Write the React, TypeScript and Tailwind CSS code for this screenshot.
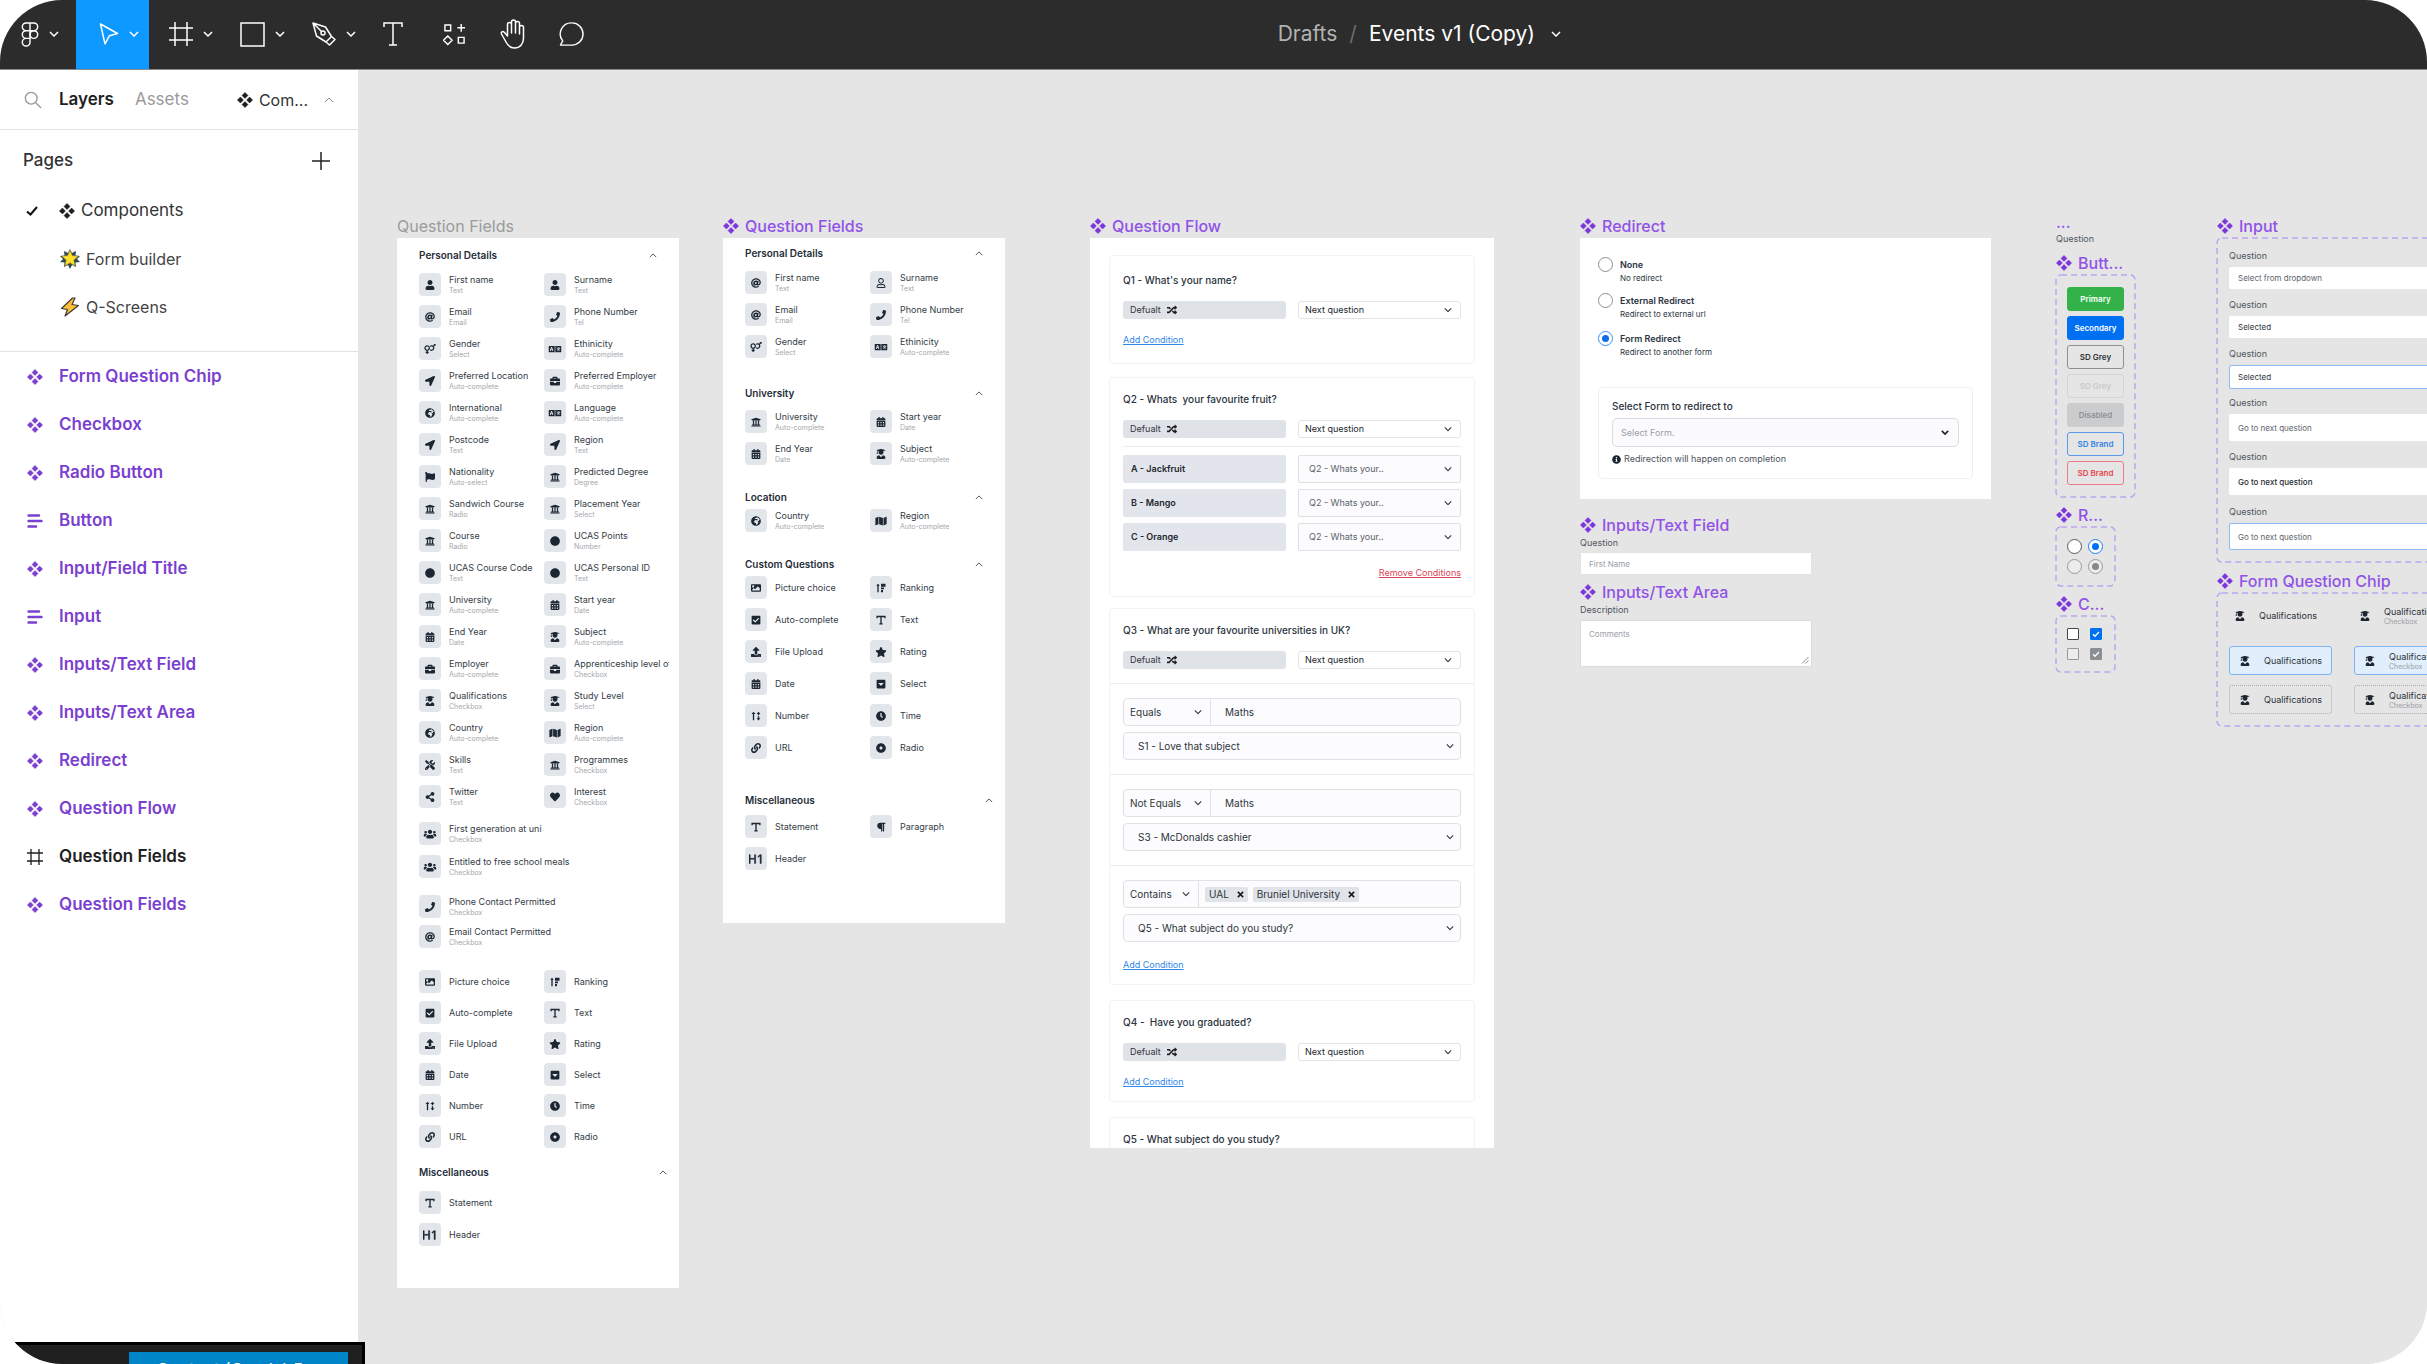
import React from "react";
import {
  FaUser, FaRegUser, FaAt, FaPhone, FaVenusMars, FaLanguage, FaLocationArrow, FaBriefcase, FaFlag,
  FaUniversity, FaCircle, FaCalendarAlt, FaUserGraduate, FaGlobeAfrica, FaMap, FaTools, FaShareAlt,
  FaHeart, FaUsers, FaImage, FaCaretSquareDown, FaCheckSquare, FaUpload, FaStar, FaClock, FaDotCircle,
  FaLink, FaParagraph, FaRandom, FaInfoCircle,
} from "react-icons/fa";
import { BsTypeH1 } from "react-icons/bs";

type IconType = React.ComponentType<{ className?: string }>;

/* ---------- icons ---------- */

function Diamonds({ className = "" }: { className?: string }) {
  return (
    <svg viewBox="0 0 16 16" fill="currentColor" className={className} aria-hidden="true">
      <path d="M8 .4 11 3.4 8 6.4 5 3.4zM8 9.6l3 3-3 3-3-3zM3.4 5l3 3-3 3-3-3zM12.6 5l3 3-3 3-3-3z" stroke="currentColor" strokeWidth=".5" strokeLinejoin="round" />
    </svg>
  );
}

function Chevron({ className = "", up = false, weight = 1.5 }: { className?: string; up?: boolean; weight?: number }) {
  return (
    <svg viewBox="0 0 10 6" fill="none" stroke="currentColor" strokeWidth={weight} className={className} aria-hidden="true">
      <path d={up ? "M1 5l4-4 4 4" : "M1 1l4 4 4-4"} />
    </svg>
  );
}

function TextIcon({ className = "" }: { className?: string }) {
  return (
    <svg viewBox="0 0 12 12" fill="none" stroke="currentColor" strokeWidth="1.6" className={className} aria-hidden="true">
      <path d="M1.3 4V1.8h9.4V4M6 1.8v8.7M4 10.6h4" />
    </svg>
  );
}

function RankingIcon({ className = "" }: { className?: string }) {
  return (
    <svg viewBox="0 0 12 12" fill="currentColor" className={className} aria-hidden="true">
      <path d="M2.4.8 4.6 3.4H3.2v7.8H1.6V3.4H.2zM6 1h5.4v3.4H6zM6 5.4h3.6v2H6zM6 8.4h2.4v2.8H6z" />
    </svg>
  );
}

function NumberIcon({ className = "" }: { className?: string }) {
  return (
    <svg viewBox="0 0 12 12" fill="currentColor" className={className} aria-hidden="true">
      <path d="M3 .8 5.4 3.6H3.8v7.6H2.2V3.6H.6zM9 .8l2.400 2.800H9.800v1.600H8.200V3.600H6.600zM8.200 6.200h1.600v2.400h1.500L9 11.400 6.700 8.600h1.500z" />
    </svg>
  );
}

function HeaderIcon({ className = "" }: { className?: string }) {
  return (
    <span className={`flex items-center justify-center ${className}`}>
      <BsTypeH1 className="h-3.5 w-3.5 shrink-0 stroke-current stroke-[0.6]" />
    </span>
  );
}

function FrameIcon({ className = "", weight = 1.5 }: { className?: string; weight?: number }) {
  return (
    <svg viewBox="0 0 24 24" fill="none" stroke="currentColor" strokeWidth={weight} className={className} aria-hidden="true">
      <path d="M6 0v24M18 0v24M0 6h24M0 18h24" />
    </svg>
  );
}

function AlignIcon({ className = "" }: { className?: string }) {
  return (
    <svg viewBox="0 0 16 16" fill="none" stroke="currentColor" strokeWidth="2.4" strokeLinecap="round" className={className} aria-hidden="true">
      <path d="M1.500 2.500h10.500M1.500 8h13M1.500 13.500h7.500" />
    </svg>
  );
}

/* ---------- toolbar ---------- */

function Tool({ label, width, active = false, menu = false, children }: {
  label: string; width: string; active?: boolean; menu?: boolean; children: React.ReactNode;
}) {
  return (
    <button aria-label={label} className={`flex h-full items-center justify-center gap-2.5 text-white ${width} ${active ? "bg-[#0d99ff]" : ""}`}>
      {children}
      {menu && <Chevron className="h-1.5 w-2.5" />}
    </button>
  );
}

function Toolbar() {
  const stroke = { fill: "none", stroke: "currentColor", strokeWidth: 1.5 } as const;
  return (
    <header className="flex h-[70px] shrink-0 items-center border-b border-[#8a8a8a] bg-[#2c2c2c] pb-px text-white">
      <nav aria-label="Tools" className="flex h-[70px] flex-1 items-center">
        <Tool label="Main menu" width="w-[76px] pl-1" menu>
          <svg viewBox="0 0 18 26" {...stroke} className="h-[25px] w-[18px]">
            <path d="M9 1H5a4 4 0 0 0 0 8h4zM9 1h4a4 4 0 0 1 0 8H9zM9 9H5a4 4 0 0 0 0 8h4zM9 17H5a4 4 0 1 0 4 4z" />
            <circle cx="13" cy="13" r="4" />
          </svg>
        </Tool>
        <Tool label="Move" width="w-[73px] pl-3" active menu>
          <svg viewBox="0 0 20 22" {...stroke} strokeLinejoin="round" className="h-[22px] w-5">
            <path d="M1.500 1l17 9.500-8 2.200L6 20.800z" />
          </svg>
        </Tool>
        <Tool label="Frame" width="w-[72px] pl-3" menu><FrameIcon className="h-6 w-6" /></Tool>
        <Tool label="Rectangle" width="w-[71px] pl-3" menu>
          <svg viewBox="0 0 25 25" {...stroke} className="h-[25px] w-[25px]"><path d="M1 1h23v23H1z" /></svg>
        </Tool>
        <Tool label="Pen" width="w-[72px] pl-3" menu>
          <svg viewBox="0 0 24 24" {...stroke} strokeLinejoin="round" className="h-6 w-6">
            <path d="M1 1l3.500 13 9.500 6 5.500-5.500L13.500 5zM14 20l3.500 3 5.500-5.500-3.500-3M1.500 1.500l8 8" />
            <circle cx="11" cy="11" r="2" />
          </svg>
        </Tool>
        <Tool label="Text" width="w-[58px]">
          <svg viewBox="0 0 20 24" {...stroke} className="h-6 w-5"><path d="M1 5V1h18v4M10 1v22M6 23h8" /></svg>
        </Tool>
        <Tool label="Resources" width="w-[64px]">
          <svg viewBox="0 0 24 24" {...stroke} className="h-[23px] w-[23px]">
            <path d="M2 2h6v6H2zM16 15h6v6h-6zM19 1v8M15 5h8M5 13.500l4.500 4.500L5 22.500.5 18z" />
          </svg>
        </Tool>
        <Tool label="Hand" width="w-[54px]">
          <svg viewBox="0 0 26 30" {...stroke} strokeLinejoin="round" strokeLinecap="round" className="h-[30px] w-[26px]">
            <path d="M7.500 17V5.500a2 2 0 0 1 4 0V14 3a2 2 0 0 1 4 0v11V4.500a2 2 0 0 1 4 0V15 8.500a2 2 0 0 1 4 0V19c0 6-3.500 10-9 10-4.500 0-6.500-2-8.500-6l-4.500-8c-.8-1.800 1.200-3.200 2.800-1.800z" />
          </svg>
        </Tool>
        <Tool label="Comment" width="w-[62px]">
          <svg viewBox="0 0 28 26" {...stroke} strokeLinejoin="round" className="h-6 w-[27px]">
            <path d="M14.500 1a12 12 0 1 1 0 24H2l2.500-4.500A12 12 0 0 1 14.500 1z" />
          </svg>
        </Tool>
      </nav>
      <div className="flex items-center text-[21px] leading-7">
        <a href="#drafts" className="text-[#b3b3b3]">Drafts</a>
        <span className="px-3 text-[#6b6b6b]">/</span>
        <button className="flex items-center gap-4">
          Events v1 (Copy)
          <Chevron className="h-1.5 w-2.5" />
        </button>
      </div>
      <div className="w-[866px]" />
    </header>
  );
}

/* ---------- sidebar ---------- */

const layers: { name: string; kind?: "set" | "frame" }[] = [
  { name: "Form Question Chip" }, { name: "Checkbox" }, { name: "Radio Button" }, { name: "Button", kind: "set" },
  { name: "Input/Field Title" }, { name: "Input", kind: "set" }, { name: "Inputs/Text Field" }, { name: "Inputs/Text Area" },
  { name: "Redirect" }, { name: "Question Flow" }, { name: "Question Fields", kind: "frame" }, { name: "Question Fields" },
];

function Sidebar() {
  return (
    <aside className="w-[358px] shrink-0 bg-white text-[17px] text-[#333]">
      <div className="flex h-[60px] items-center border-b border-[#e2e2e2] pl-6 pr-6 pt-px">
        <svg viewBox="0 0 20 20" fill="none" stroke="#9a9a9a" strokeWidth="1.5" className="h-5 w-[18px]" aria-hidden="true">
          <circle cx="8" cy="8" r="6.500" /><path d="M13 13l6 6" />
        </svg>
        <button className="ml-[17px] font-semibold text-[#1f1f1f]">Layers</button>
        <button className="ml-[21px] text-[#9a9a9a]">Assets</button>
        <button className="ml-auto flex items-center gap-1.5 text-[16px]">
          <Diamonds className="h-4 w-4 text-[#1f1f1f]" />
          Com...
          <Chevron up className="ml-2.5 h-1.5 w-2.5 text-[#8a8a8a]" weight={1} />
        </button>
      </div>
      <div className="border-b border-[#e2e2e2] pb-5">
        <div className="flex h-[57px] items-center justify-between pl-[23px] pr-7 pt-1">
          <h2 className="font-medium">Pages</h2>
          <button aria-label="Add page">
            <svg viewBox="0 0 18 18" stroke="#222" strokeWidth="1.5" className="h-[18px] w-[18px]"><path d="M9 0v18M0 9h18" /></svg>
          </button>
        </div>
        <a href="#components" className="flex h-12 items-center pl-[26px]">
          <svg viewBox="0 0 12 10" fill="none" stroke="#111" strokeWidth="2" className="h-2.5 w-3" aria-hidden="true"><path d="M1 5.500l3.500 3L11 1" /></svg>
          <Diamonds className="ml-[21px] mr-1.5 h-4 w-4 text-[#1f1f1f]" />
          Components
        </a>
        <a href="#form-builder" className="flex h-12 items-center gap-1.5 pl-[60px] text-[16px] text-[#444]">
          <svg viewBox="0 0 20 20" className="h-5 w-5" aria-hidden="true">
            <path d="M10 0l2 4 4-2-.5 4.500L20 7l-3 3 3 3-4.500.5L16 18l-4-2-2 4-2-4-4 2 .5-4.500L0 13l3-3-3-3 4.500-.5L4 2l4 2z" fill="#2c4a52" />
            <path d="M10 1.500l2.300 5.200 5.700.6-4.300 3.800 1.300 5.600-5-3-5 3 1.300-5.600L2 7.300l5.700-.6z" fill="#fde12d" stroke="#c79a12" strokeWidth=".6" />
          </svg>
          Form builder
        </a>
        <a href="#q-screens" className="flex h-12 items-center gap-1.5 pl-[60px] text-[16px] text-[#444]">
          <svg viewBox="0 0 20 20" className="h-5 w-5" aria-hidden="true">
            <path d="M12.500 1L1.500 11.500l6 1L5 19l13.500-10.500-6.500-1L15 1z" fill="#fcbf3a" stroke="#3d3a38" strokeWidth="1.200" strokeLinejoin="round" />
          </svg>
          Q-Screens
        </a>
      </div>
      <ul className="pt-px">
        {layers.map((l, i) => (
          <li key={i}>
            <a href={`#layer-${i}`} className={`flex h-12 items-center gap-4 pl-[27px] font-semibold ${l.kind === "frame" ? "text-[#222]" : "text-[#7b3fd0]"}`}>
              {l.kind === "frame" ? <FrameIcon className="h-4 w-4" weight={2} /> : l.kind === "set" ? <AlignIcon className="h-4 w-4" /> : <Diamonds className="h-4 w-4" />}
              {l.name}
            </a>
          </li>
        ))}
      </ul>
    </aside>
  );
}

/* ---------- canvas building blocks ---------- */

function Frame({ title, place, plain = false, children }: {
  title: string; place: string; plain?: boolean; children: React.ReactNode;
}) {
  return (
    <section className={`absolute ${place}`}>
      <h3 className={`flex h-[23px] items-center gap-1.5 whitespace-nowrap pb-px text-[16px] leading-[22px] ${plain ? "text-[#9b9b9b]" : "font-medium text-[#9152e8]"}`}>
        {!plain && <Diamonds className="h-4 w-4 shrink-0 text-[#7c35dc]" />}
        {title}
      </h3>
      {children}
    </section>
  );
}

type Item = [icon: IconType, name: string, sub?: string];

function Field({ item: [Icon, name, sub] }: { item: Item }) {
  return (
    <div className="flex h-[23px] min-w-0 items-center gap-2 overflow-hidden whitespace-nowrap">
      <span className="flex h-[23px] w-[22px] shrink-0 items-center justify-center rounded-[4px] bg-[#e2e5ea] text-[#1c2733]">
        <Icon className="h-2.5 w-3.5" />
      </span>
      {sub ? (
        <span className="self-end">
          <span className="block text-[9px] leading-[11px] text-[#343c46]">{name}</span>
          <span className="block text-[7px] leading-[11px] text-[#a3a7ad]">{sub}</span>
        </span>
      ) : (
        <span className="text-[9px] leading-[11px] text-[#343c46]">{name}</span>
      )}
    </div>
  );
}

function Fields({ items, space, single = false, gap = "gap-y-[9px]" }: { items: Item[]; space: string; single?: boolean; gap?: string }) {
  return (
    <div className={`grid pr-2.5 ${single ? "grid-cols-1" : "grid-cols-[125px_1fr]"} ${gap} ${space}`}>
      {items.map((it, i) => <Field key={i} item={it} />)}
    </div>
  );
}

function Heading({ title, space, inset = "pr-[22px]" }: { title: string; space: string; inset?: string }) {
  return (
    <div className={`flex h-3.5 items-center justify-between ${inset} ${space}`}>
      <h4 className="text-[10px] font-semibold leading-[14px] text-[#252d38]">{title}</h4>
      <button aria-label={`Collapse ${title}`}><Chevron up className="h-[5px] w-2 text-[#4a5058]" weight={1.2} /></button>
    </div>
  );
}

const T: IconType = TextIcon;

const allDetails: Item[] = [
  [FaUser, "First name", "Text"], [FaUser, "Surname", "Text"],
  [FaAt, "Email", "Email"], [FaPhone, "Phone Number", "Tel"],
  [FaVenusMars, "Gender", "Select"], [FaLanguage, "Ethinicity", "Auto-complete"],
  [FaLocationArrow, "Preferred Location", "Auto-complete"], [FaBriefcase, "Preferred Employer", "Auto-complete"],
  [FaGlobeAfrica, "International", "Auto-complete"], [FaLanguage, "Language", "Auto-complete"],
  [FaLocationArrow, "Postcode", "Text"], [FaLocationArrow, "Region", "Text"],
  [FaFlag, "Nationality", "Auto-select"], [FaUniversity, "Predicted Degree", "Degree"],
  [FaUniversity, "Sandwich Course", "Radio"], [FaUniversity, "Placement Year", "Select"],
  [FaUniversity, "Course", "Radio"], [FaCircle, "UCAS Points", "Number"],
  [FaCircle, "UCAS Course Code", "Text"], [FaCircle, "UCAS Personal ID", "Text"],
  [FaUniversity, "University", "Auto-complete"], [FaCalendarAlt, "Start year", "Date"],
  [FaCalendarAlt, "End Year", "Date"], [FaUserGraduate, "Subject", "Auto-complete"],
  [FaBriefcase, "Employer", "Auto-complete"], [FaBriefcase, "Apprenticeship level of interest", "Checkbox"],
  [FaUserGraduate, "Qualifications", "Checkbox"], [FaUserGraduate, "Study Level", "Select"],
  [FaGlobeAfrica, "Country", "Auto-complete"], [FaMap, "Region", "Auto-complete"],
  [FaTools, "Skills", "Text"], [FaUniversity, "Programmes", "Checkbox"],
  [FaShareAlt, "Twitter", "Text"], [FaHeart, "Interest", "Checkbox"],
];

const customQuestions: Item[] = [
  [FaImage, "Picture choice"], [RankingIcon, "Ranking"],
  [FaCheckSquare, "Auto-complete"], [T, "Text"],
  [FaUpload, "File Upload"], [FaStar, "Rating"],
  [FaCalendarAlt, "Date"], [FaCaretSquareDown, "Select"],
  [NumberIcon, "Number"], [FaClock, "Time"],
  [FaLink, "URL"], [FaDotCircle, "Radio"],
];

function QuestionFieldsFull() {
  return (
    <Frame title="Question Fields" place="left-[39px] top-[145px] w-[282px]" plain>
      <div className="bg-white pb-[42px] pl-[22px] pt-2.5">
        <Heading title="Personal Details" space="" />
        <Fields items={allDetails} space="mt-[11px]" />
        <Fields single gap="gap-y-2.5" space="mt-[14px]" items={[
          [FaUsers, "First generation at uni", "Checkbox"], [FaUsers, "Entitled to free school meals", "Checkbox"],
        ]} />
        <Fields single gap="gap-y-[7px]" space="mt-[17px]" items={[
          [FaPhone, "Phone Contact Permitted", "Checkbox"], [FaAt, "Email Contact Permitted", "Checkbox"],
        ]} />
        <Fields items={customQuestions} gap="gap-y-2" space="mt-[22px]" />
        <Heading title="Miscellaneous" space="mt-[17px]" inset="pr-3" />
        <Fields single space="mt-3" items={[[T, "Statement"], [HeaderIcon, "Header"]]} />
      </div>
    </Frame>
  );
}

function QuestionFieldsComponent() {
  return (
    <Frame title="Question Fields" place="left-[365px] top-[145px] w-[282px]">
      <div className="bg-white pb-[53px] pl-[22px] pt-2">
        <Heading title="Personal Details" space="" />
        <Fields space="mt-[11px]" items={[
          [FaAt, "First name", "Text"], [FaRegUser, "Surname", "Text"],
          [FaAt, "Email", "Email"], [FaPhone, "Phone Number", "Tel"],
          [FaVenusMars, "Gender", "Select"], [FaLanguage, "Ethinicity", "Auto-complete"],
        ]} />
        <Heading title="University" space="mt-7" />
        <Fields space="mt-2.5" items={[
          [FaUniversity, "University", "Auto-complete"], [FaCalendarAlt, "Start year", "Date"],
          [FaCalendarAlt, "End Year", "Date"], [FaUserGraduate, "Subject", "Auto-complete"],
        ]} />
        <Heading title="Location" space="mt-[25px]" />
        <Fields space="mt-[5px]" items={[[FaGlobeAfrica, "Country", "Auto-complete"], [FaMap, "Region", "Auto-complete"]]} />
        <Heading title="Custom Questions" space="mt-[25px]" />
        <Fields space="mt-[5px]" items={customQuestions} />
        <Heading title="Miscellaneous" space="mt-[34px]" inset="pr-3" />
        <Fields space="mt-2" items={[[T, "Statement"], [FaParagraph, "Paragraph"], [HeaderIcon, "Header"]]} />
      </div>
    </Frame>
  );
}

/* ---------- question flow ---------- */

function Select({ label, value, box, text, arrow = "right-2" }: { label: string; value: string; box: string; text: string; arrow?: string }) {
  return (
    <div className={`relative ${box}`}>
      <select aria-label={label} defaultValue={value} className={`block h-full w-full appearance-none bg-transparent leading-4 outline-none ${text}`}>
        <option>{value}</option>
      </select>
      <Chevron className={`pointer-events-none absolute top-1/2 h-[5px] w-2 -translate-y-1/2 text-[#3b4148] ${arrow}`} weight={1.5} />
    </div>
  );
}

function QuestionCard({ title, space, children }: { title: string; space: string; children?: React.ReactNode }) {
  return (
    <article className={`mx-[19px] rounded-[4px] border border-[#f3f3f6] ${space}`}>
      <h4 className="whitespace-pre px-[13px] text-[10px] font-medium leading-[14px] text-[#2b3440]">{title}</h4>
      {children}
    </article>
  );
}

function DefaultRow() {
  return (
    <div className="mx-[13px] mt-3.5 grid grid-cols-2 gap-3">
      <div className="flex h-[18px] items-center gap-1.5 rounded-[3px] bg-[#dfe2e7] pl-[7px] text-[9px] text-[#30353b]">
        Defualt <FaRandom className="h-2.5 w-2.5 text-[#1b1f24]" />
      </div>
      <Select label="Default target" value="Next question" box="h-[18px] rounded-[3px] border border-[#e2e4e8] bg-white" text="pl-1.5 text-[9px] text-[#22262b]" />
    </div>
  );
}

function LinkLine({ text, tone, space }: { text: string; tone: string; space: string }) {
  return (
    <p className={`mx-[13px] text-[9px] leading-[14px] ${space}`}>
      <a href="#condition" className={`underline ${tone}`}>{text}</a>
    </p>
  );
}

function Tag({ text }: { text: string }) {
  return (
    <span className="flex h-[15px] items-center gap-2 rounded-[2px] bg-[#e0e3e7] px-1">
      {text}
      <button aria-label={`Remove ${text}`}>
        <svg viewBox="0 0 8 8" stroke="#16191d" strokeWidth="1.8" className="h-[7px] w-[7px]"><path d="M1 1l6 6M7 1L1 7" /></svg>
      </button>
    </span>
  );
}

function Condition({ op, opWidth, target, children }: { op: string; opWidth: string; target: string; children: React.ReactNode }) {
  return (
    <div className="mt-3.5 flex flex-col gap-1.5 border-t border-[#ececf0] px-[13px] pt-3.5 text-[10px] text-[#2e343b]">
      <div className="flex h-7 rounded-[4px] border border-[#dfe1e5] bg-[#fcfcfe]">
        <Select label="Operator" value={op} box={`border-r border-[#dfe1e5] ${opWidth}`} text="pl-1.5" />
        {children}
      </div>
      <Select label="Go to" value={target} box="h-7 rounded-[4px] border border-[#dfe1e5] bg-[#fcfcfe]" text="pl-3.5" arrow="right-1.5" />
    </div>
  );
}

function QuestionFlow() {
  const blue = "text-[#2f86eb]";
  const value = "min-w-0 flex-1 bg-transparent pl-3.5 outline-none";
  return (
    <Frame title="Question Flow" place="left-[732px] top-[145px] w-[404px]">
      <div className="h-[910px] overflow-hidden bg-white pt-[17px]">
        <QuestionCard title="Q1 - What's your name?" space="pb-4 pt-[17px]">
          <DefaultRow />
          <LinkLine text="Add Condition" tone={blue} space="mt-3.5" />
        </QuestionCard>
        <QuestionCard title="Q2 - Whats  your favourite fruit?" space="mt-[13px] pb-4 pt-3.5">
          <DefaultRow />
          <div className="mx-[13px] mt-2 grid grid-cols-2 gap-x-3 gap-y-1.5 border-t border-[#ececf0] pt-2">
            {["A - Jackfruit", "B - Mango", "C - Orange"].map((o) => (
              <React.Fragment key={o}>
                <div className="flex h-7 items-center rounded-[2px] bg-[#e2e5ec] pl-2 text-[9px] font-semibold text-[#22272d]">{o}</div>
                <Select label={o} value="Q2 -  Whats your.." box="h-7 rounded-[2px] border border-[#dfe1e5] bg-[#fcfcfe]" text="pl-2.5 text-[9px] text-[#5a6068]" />
              </React.Fragment>
            ))}
          </div>
          <LinkLine text="Remove Conditions" tone="text-[#dc4458]" space="mt-[15px] text-right" />
        </QuestionCard>
        <QuestionCard title="Q3 - What are your favourite universities in UK?" space="mt-[11px] pb-3 pt-3.5">
          <DefaultRow />
          <Condition op="Equals" opWidth="w-[87px]" target="S1 - Love that subject">
            <input aria-label="Value" defaultValue="Maths" className={value} />
          </Condition>
          <Condition op="Not Equals" opWidth="w-[87px]" target="S3 - McDonalds cashier">
            <input aria-label="Value" defaultValue="Maths" className={value} />
          </Condition>
          <Condition op="Contains" opWidth="w-[75px]" target="Q5 - What subject do you study?">
            <div className="flex items-center gap-[5px] pl-1.5"><Tag text="UAL" /><Tag text="Bruniel University" /></div>
          </Condition>
          <LinkLine text="Add Condition" tone={blue} space="mt-4" />
        </QuestionCard>
        <QuestionCard title="Q4 -  Have you graduated?" space="mt-[15px] pb-3 pt-3.5">
          <DefaultRow />
          <LinkLine text="Add Condition" tone={blue} space="mt-3.5" />
        </QuestionCard>
        <QuestionCard title="Q5 - What subject do you study?" space="mt-[15px] pb-4 pt-3.5" />
      </div>
    </Frame>
  );
}

/* ---------- redirect and inputs ---------- */

function Radio({ name, label, tone, dot = "", disabled = false, on = false, id }: {
  name: string; label?: string; tone: string; dot?: string; disabled?: boolean; on?: boolean; id?: string;
}) {
  return (
    <span className="relative block h-[15px] w-[15px] shrink-0">
      <input id={id} type="radio" name={name} aria-label={label} defaultChecked={on} disabled={disabled}
        className={`block h-[15px] w-[15px] appearance-none rounded-full border ${tone}`} />
      {on && <span className={`pointer-events-none absolute left-1 top-1 h-[7px] w-[7px] rounded-full ${dot}`} />}
    </span>
  );
}

function RedirectOption({ id, title, note, space, on = false }: { id: string; title: string; note: string; space: string; on?: boolean }) {
  return (
    <div className={`flex gap-[7px] ${space}`}>
      <Radio id={id} name="redirect" on={on} tone={on ? "border-[#3b8df5] bg-white" : "border-[#8d9095] bg-white"} dot="bg-[#0f6fe0]" />
      <label htmlFor={id} className="block">
        <span className="block text-[9px] font-semibold leading-[15px] text-[#2b3440]">{title}</span>
        <span className="block text-[8px] leading-[12px] text-[#2b3440]">{note}</span>
      </label>
    </div>
  );
}

function Redirect() {
  return (
    <Frame title="Redirect" place="left-[1222px] top-[145px] w-[411px]">
      <div className="bg-white px-[18px] pb-5 pt-[19px]">
        <RedirectOption id="r-none" title="None" note="No redirect" space="" />
        <RedirectOption id="r-ext" title="External Redirect" note="Redirect to external url" space="mt-[9px]" />
        <RedirectOption id="r-form" title="Form Redirect" note="Redirect to another form" space="mt-[11px]" on />
        <div className="mt-[29px] rounded-[4px] border border-[#f0f0f3] px-[13px] pb-3 pt-[11px]">
          <label htmlFor="redirect-form" className="block text-[10px] font-medium leading-[14px] text-[#2b3440]">Select Form to redirect to</label>
          <div className="relative mt-[5px]">
            <select id="redirect-form" defaultValue="Select Form." className="h-[29px] w-full appearance-none rounded-[5px] border border-[#dadce2] bg-[#fbfbfd] pl-2 text-[9px] text-[#9a9ea5] outline-none">
              <option>Select Form.</option>
            </select>
            <Chevron className="pointer-events-none absolute right-2.5 top-3 h-[5px] w-2 text-[#1c2228]" weight={2} />
          </div>
          <p className="mt-[5px] flex items-center gap-[3px] text-[9px] leading-[14px] text-[#4c525a]">
            <FaInfoCircle className="h-[9px] w-[9px] text-[#1c2530]" />
            Redirection will happen on completion
          </p>
        </div>
      </div>
    </Frame>
  );
}

function TextInputs() {
  return (
    <>
      <Frame title="Inputs/Text Field" place="left-[1222px] top-[444px] w-[232px]">
        <label htmlFor="first-name" className="block text-[9px] leading-[11px] text-[#50555c]">Question</label>
        <input id="first-name" placeholder="First Name" className="mt-1 block h-[23px] w-full rounded-[1px] border border-[#e2e2e2] bg-white px-2 text-[8px] outline-none placeholder:text-[#9a9ea5]" />
      </Frame>
      <Frame title="Inputs/Text Area" place="left-[1222px] top-[511px] w-[232px]">
        <label htmlFor="comments" className="block text-[9px] leading-[11px] text-[#50555c]">Description</label>
        <div className="relative mt-[5px]">
          <textarea id="comments" placeholder="Comments" className="block h-[47px] w-full resize-none rounded-[1px] border border-[#dcdcdc] bg-white px-2 py-[7px] text-[8px] outline-none placeholder:text-[#9a9ea5]" />
          <svg viewBox="0 0 8 8" stroke="#777" strokeWidth=".8" className="absolute bottom-[3px] right-[3px] h-2 w-2" aria-hidden="true"><path d="M1 7.500L7.500 1M4.500 7.500l3-3" /></svg>
        </div>
      </Frame>
    </>
  );
}

/* ---------- component sets ---------- */

function DashedSet({ className = "", children }: { className?: string; children: React.ReactNode }) {
  return (
    <div className={`relative ${className}`}>
      <svg className="pointer-events-none absolute inset-0 h-full w-full overflow-visible" aria-hidden="true">
        <rect x="0" y="0" width="100%" height="100%" rx="5" fill="none" stroke="#bba6ee" strokeWidth="1.5" strokeDasharray="6 4" />
      </svg>
      {children}
    </div>
  );
}

const buttons: [string, string][] = [
  ["Primary", "bg-[#34b24a] border-[#34b24a] text-white"],
  ["Secondary", "bg-[#0070f3] border-[#0070f3] text-white"],
  ["SD Grey", "border-[#8c9094] text-[#30353b]"],
  ["SD Grey", "border-[#d3d4d6] text-[#c9cacc]"],
  ["Disabled", "bg-[#cbcccd] border-[#cbcccd] text-[#8e9194]"],
  ["SD Brand", "border-[#5b9bea] text-[#3384e6]"],
  ["SD Brand", "border-[#ec7b80] text-[#e8474e]"],
];

function Check({ label, on = false, tone, disabled = false }: { label: string; on?: boolean; tone: string; disabled?: boolean }) {
  return (
    <span className="relative block h-3 w-3">
      <input type="checkbox" aria-label={label} defaultChecked={on} disabled={disabled} className={`block h-3 w-3 appearance-none rounded-[1px] border ${tone}`} />
      {on && (
        <svg viewBox="0 0 12 12" fill="none" stroke="#fff" strokeWidth="1.3" className="pointer-events-none absolute inset-0 h-3 w-3"><path d="M3 6.200l2 2L9 4" /></svg>
      )}
    </span>
  );
}

function ControlSets() {
  return (
    <>
      <section className="absolute left-[1698px] top-[145px]">
        <h3 className="h-[17px] text-[16px] font-medium leading-[15px] text-[#9152e8]">...</h3>
        <p className="text-[9px] leading-[14px] text-[#50555c]">Question</p>
      </section>
      <Frame title="Butt..." place="left-[1698px] top-[182px] w-[79px]">
        <DashedSet className="flex flex-col gap-[5px] px-[11px] py-3">
          {buttons.map(([text, tone], i) => (
            <button key={i} disabled={text === "Disabled" || i === 3} className={`h-6 rounded-[3px] border text-[8px] font-semibold ${tone}`}>{text}</button>
          ))}
        </DashedSet>
      </Frame>
      <Frame title="R..." place="left-[1698px] top-[434px] w-[59px]">
        <DashedSet className="grid grid-cols-[15px_15px] gap-x-1.5 gap-y-[5px] px-[11px] py-3">
          <Radio name="set-a" label="Off" tone="border-[#55595e] bg-white" />
          <Radio name="set-b" label="On" on tone="border-[#1f7cf0] bg-white" dot="bg-[#0070f3]" />
          <Radio name="set-c" label="Off, disabled" disabled tone="border-[#96999c] bg-[#ececec]" />
          <Radio name="set-d" label="On, disabled" disabled on tone="border-[#96999c] bg-[#ececec]" dot="bg-[#85898d]" />
        </DashedSet>
      </Frame>
      <Frame title="C..." place="left-[1698px] top-[523px] w-[59px]">
        <DashedSet className="grid grid-cols-[12px_12px] gap-x-[11px] gap-y-2 px-[11px] py-3">
          <Check label="Off" tone="border-[#45494e] bg-white" />
          <Check label="On" on tone="border-[#0070f3] bg-[#0070f3]" />
          <Check label="Off, disabled" disabled tone="border-[#96999c] bg-[#ececec]" />
          <Check label="On, disabled" disabled on tone="border-[#8b8f93] bg-[#8b8f93]" />
        </DashedSet>
      </Frame>
    </>
  );
}

const inputs: { value: string; text: string; box: string; space: string }[] = [
  { value: "Select from dropdown", text: "text-[#60656c]", box: "h-[22px] border-white", space: "mt-2.5" },
  { value: "Selected", text: "text-[#30353b]", box: "h-[22px] border-white", space: "mt-[9px]" },
  { value: "Selected", text: "text-[#30353b]", box: "h-[24px] border-[#8fbaf0]", space: "mt-[9px]" },
  { value: "Go to next question", text: "text-[#60656c]", box: "h-[27px] border-white", space: "mt-[7px]" },
  { value: "Go to next question", text: "font-medium text-[#23282e]", box: "h-[27px] border-white", space: "mt-[9px]" },
  { value: "Go to next question", text: "text-[#60656c]", box: "h-[27px] border-[#8fbaf0]", space: "mt-[10px]" },
];

function InputSet() {
  return (
    <Frame title="Input" place="left-[1859px] top-[145px] w-[280px]">
      <DashedSet className="px-3 pb-3 pt-px">
        {inputs.map((f, i) => (
          <div key={i} className={f.space}>
            <label htmlFor={`field-${i}`} className="block text-[9px] leading-[13px] text-[#50555c]">Question</label>
            <input id={`field-${i}`} defaultValue={f.value} className={`mt-[5px] block w-full rounded-[2px] border bg-white px-2 text-[8px] outline-none ${f.box} ${f.text}`} />
          </div>
        ))}
      </DashedSet>
    </Frame>
  );
}

function Chip({ look, sub = false }: { look: string; sub?: boolean }) {
  return (
    <div className={`flex h-[29px] items-center gap-3 rounded-[3px] pr-2.5 text-[#2b3138] ${look}`}>
      <span className="flex h-[22px] w-[22px] shrink-0 items-center justify-center"><FaUserGraduate className="h-2.5 w-2.5 text-[#1c2530]" /></span>
      <span className="-ml-1">
        <span className="block text-[9px] leading-[11px]">Qualifications</span>
        {sub && <span className="block text-[7px] leading-[9px] text-[#9a9ea5]">Checkbox</span>}
      </span>
    </div>
  );
}

function ChipSet() {
  const selected = "border border-[#7fb2f0] bg-[#e1eefb] pl-1";
  const dotted = "border border-dotted border-[#a9acb0] pl-1";
  return (
    <Frame title="Form Question Chip" place="left-[1859px] top-[500px] w-[280px]">
      <DashedSet className="grid grid-cols-[103px_103px] gap-x-[22px] gap-y-2.5 px-3 pb-3 pt-2">
        <Chip look="" />
        <Chip look="" sub />
        <Chip look={`mt-1.5 ${selected}`} />
        <Chip look={`mt-1.5 ${selected}`} sub />
        <Chip look={dotted} />
        <Chip look={dotted} sub />
      </DashedSet>
    </Frame>
  );
}

export default function App() {
  return (
    <div className="h-screen bg-white font-['Inter',sans-serif]">
      <div className="relative flex h-full flex-col overflow-hidden rounded-[62px] bg-[#e5e5e5]">
        <Toolbar />
        <div className="flex min-h-0 flex-1">
          <Sidebar />
          <main className="relative min-w-0 flex-1 overflow-hidden bg-[#e5e5e5]">
            <QuestionFieldsFull />
            <QuestionFieldsComponent />
            <QuestionFlow />
            <Redirect />
            <TextInputs />
            <ControlSets />
            <InputSet />
            <ChipSet />
          </main>
        </div>
        <div className="absolute bottom-0 left-0 flex h-[22px] w-[365px] overflow-hidden border-r-[3px] border-t-[3px] border-black bg-[#1f1f1f] pl-[129px] pr-[14px] pt-[7px]">
          <button className="flex h-10 w-full items-start justify-center rounded-[1px] bg-[#0086c8] pt-1.5 text-[17px] leading-6 text-white">Contact (Candy) Pro</button>
        </div>
      </div>
    </div>
  );
}
